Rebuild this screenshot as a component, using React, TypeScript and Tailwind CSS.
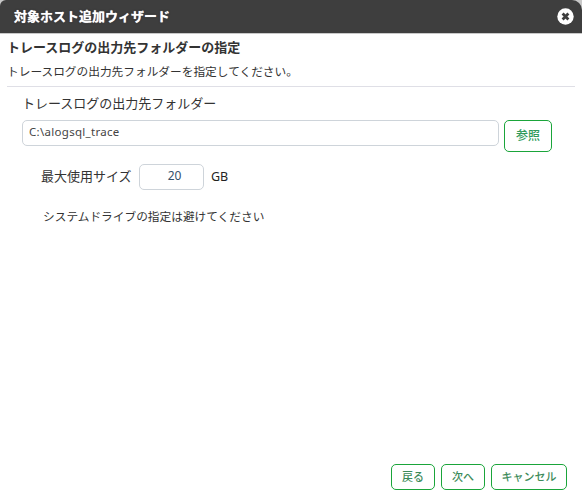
export default function App() {
  return (
    <div className="w-[582px] h-[496px] bg-white flex flex-col overflow-hidden font-['Noto_Sans','Noto_Sans_CJK_JP',sans-serif] text-[#333]">
      <div className="h-[34px] shrink-0 bg-[#c8c8c8]">
        <div className="h-[33px] bg-[#3e3e3e] rounded-tl-[6px] rounded-tr-[10px] flex items-center justify-between pl-[14px] pr-[8px]">
          <span className="text-white font-bold text-[13px] [text-shadow:0_0_1px_#fff,0_0_2px_#000]">対象ホスト追加ウィザード</span>
          <svg width="17" height="17" viewBox="0 0 17 17">
            <circle cx="8.5" cy="8.5" r="8.2" fill="#fff" />
            <path d="M5.6 5.6 11.4 11.4M11.4 5.6 5.6 11.4" stroke="#3e3e3e" strokeWidth="2.8" />
          </svg>
        </div>
      </div>
      <div className="flex-1 flex flex-col min-h-0">
        <div className="mx-[7px] border-b border-[#dfdfe6] h-[53px] shrink-0 flex flex-col">
          <div className="text-[13px] font-bold leading-[18px] mt-[4px]">トレースログの出力先フォルダーの指定</div>
          <div className="text-[11.7px] leading-[16px] mt-[7px]">トレースログの出力先フォルダーを指定してください。</div>
        </div>
        <div className="pl-[22px] text-[13px] leading-[18px] mt-[7px]">トレースログの出力先フォルダー</div>
        <div className="flex items-start pl-[22px] mt-[8px]">
          <div className="w-[477px] h-[26px] border border-[#ced4da] rounded-[5px] flex items-center pl-[6px] text-[11.5px] tracking-[0.3px] text-[#444] pb-[2px]">C:\alogsql_trace</div>
          <button className="ml-[5px] w-[48px] h-[32px] border border-[#1aa53a] rounded-[5px] text-[12px] font-medium text-[#2f9a5a]">参照</button>
        </div>
        <div className="flex items-center pl-[41px] mt-[12px]">
          <span className="text-[13px] w-[98px]">最大使用サイズ</span>
          <div className="w-[65px] h-[26px] border border-[#ced4da] rounded-[5px] flex items-center justify-center text-[12px] text-[#35506a] pb-[3px] pl-[6px]">20</div>
          <span className="ml-[7px] text-[12.5px] text-[#222]">GB</span>
        </div>
        <div className="pl-[43px] mt-[18px] text-[11.7px] leading-[16px]">システムドライブの指定は避けてください</div>
        <div className="mt-auto mb-[6px] flex justify-end gap-[6px] pr-[15px]">
          <button className="w-[44px] h-[26px] border border-[#1aa53a] rounded-[5px] text-[11px] font-medium text-[#3d8b5a]">戻る</button>
          <button className="w-[44px] h-[26px] border border-[#1aa53a] rounded-[5px] text-[11px] font-medium text-[#3d8b5a]">次へ</button>
          <button className="w-[76px] h-[26px] border border-[#1aa53a] rounded-[5px] text-[11px] font-medium text-[#3d8b5a]">キャンセル</button>
        </div>
      </div>
    </div>
  );
}
